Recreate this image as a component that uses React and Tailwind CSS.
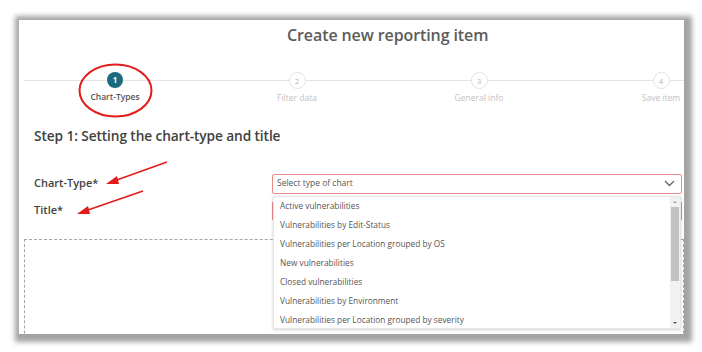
import React from 'react';

const steps = [
  { n: 1, label: 'Chart-Types', active: true },
  { n: 2, label: 'Filter data' },
  { n: 3, label: 'General info' },
  { n: 4, label: 'Save item' },
];

const chartTypes = [
  'Active vulnerabilities',
  'Vulnerabilities by Edit-Status',
  'Vulnerabilities per Location grouped by OS',
  'New vulnerabilities',
  'Closed vulnerabilities',
  'Vulnerabilities by Environment',
  'Vulnerabilities per Location grouped by severity',
];

function Annotations() {
  return (
    <svg className="absolute left-0 top-0 pointer-events-none" width="702" height="352" viewBox="0 0 702 352">
      <ellipse cx="115.5" cy="90.5" rx="36" ry="26" fill="none" stroke="#e31b1b" strokeWidth="2" />
      {/* arrow to Chart-Type */}
      <line x1="167" y1="162" x2="114" y2="181" stroke="#e31b1b" strokeWidth="1.6" />
      <polygon points="106,184 117,176 119,184" fill="#e31b1b" />
      {/* arrow to Title */}
      <line x1="143" y1="191" x2="85" y2="211" stroke="#e31b1b" strokeWidth="1.6" />
      <polygon points="77,214 88,206 90,214" fill="#e31b1b" />
    </svg>
  );
}

export default function App() {
  return (
    <div className="relative w-[702px] h-[352px] bg-white overflow-hidden pt-[20px] pl-[19px]" style={{ fontFamily: '"Open Sans", sans-serif' }}>
      <div className="relative w-[665px] h-[314px] bg-white overflow-hidden shadow-[2px_2px_5px_6px_rgba(0,0,0,0.36)]">
        {/* header */}
        <h1 className="pl-[268px] pt-[3px] h-[32px] text-[16px] font-semibold text-[#5b5b5b] tracking-[-0.1px]">
          Create new reporting item
        </h1>

        {/* stepper */}
        <div className="relative mt-[13px] pl-[5px] h-[40px]">
          <div className="absolute left-[5px] right-0 top-[15px] h-px bg-[#e4e4e4]" />
          <div className="relative flex">
            {steps.map((s) => (
              <div key={s.n} className="w-[182px] shrink-0 flex flex-col items-center">
                <div
                  className={
                    s.active
                      ? 'w-[16px] h-[16px] mt-[7px] rounded-full bg-[#1c6a7e] text-white text-[8px] font-bold flex items-center justify-center'
                      : 'w-[17px] h-[17px] mt-[7px] rounded-full bg-white border border-[#e2e2e2] text-[#b5b5b5] text-[8px] flex items-center justify-center'
                  }
                >
                  {s.n}
                </div>
                <div className={s.active ? 'mt-[3px] text-[8.5px] font-semibold text-[#555]' : 'mt-[3px] text-[8.5px] text-[#c2c2c2]'}>
                  {s.label}
                </div>
              </div>
            ))}
          </div>
        </div>

        {/* step heading */}
        <h2 className="pl-[15px] mt-[21px] text-[13.7px] font-semibold text-[#414141] tracking-[-0.1px]">
          Step 1: Setting the chart-type and title
        </h2>

        {/* form */}
        <div className="relative mt-[27px] pl-[15px] grid grid-cols-[238px_410px] gap-y-[7px] items-center">
          <div className="text-[11px] font-semibold text-[#414141]">Chart-Type*</div>
          <div className="h-[20px] border border-[#f08b8b] rounded-[2px] flex items-center justify-between pl-[4px] pr-[6px]">
            <span className="text-[8.5px] text-[#555]">Select type of chart</span>
            <svg width="11" height="7" viewBox="0 0 11 7">
              <path d="M1 1 L5.5 5.5 L10 1" fill="none" stroke="#666" strokeWidth="1.3" />
            </svg>
          </div>
          <div className="text-[11px] font-semibold text-[#414141]">Title*</div>
          <div className="h-[20px] border border-[#f08b8b] rounded-[2px]" />

          {/* open dropdown list */}
          <div className="absolute left-[254px] top-[22px] w-[408px] h-[133px] bg-white border border-[#e6e6e6] shadow-[0_1px_3px_rgba(0,0,0,0.18)] flex z-10">
            <ul className="flex-1">
              {chartTypes.map((t) => (
                <li key={t} className="h-[19px] flex items-center pl-[6px] text-[8.3px] text-[#555]">
                  {t}
                </li>
              ))}
            </ul>
            <div className="w-[10px] bg-[#f1f1f1] flex flex-col items-center">
              <svg width="10" height="10" viewBox="0 0 10 10">
                <path d="M3 6 L5 4 L7 6 Z" fill="#a3a3a3" />
              </svg>
              <div className="w-[8px] h-[74px] bg-[#c1c1c1]" />
              <div className="flex-1" />
              <svg width="10" height="10" viewBox="0 0 10 10">
                <path d="M3 4 L5 6 L7 4 Z" fill="#505050" />
              </svg>
            </div>
          </div>
        </div>

        {/* dashed drop area */}
        <div className="ml-[5px] mt-[18px] h-[120px] border border-dashed border-[#a5a5a5]" />
      </div>
      <Annotations />
    </div>
  );
}
